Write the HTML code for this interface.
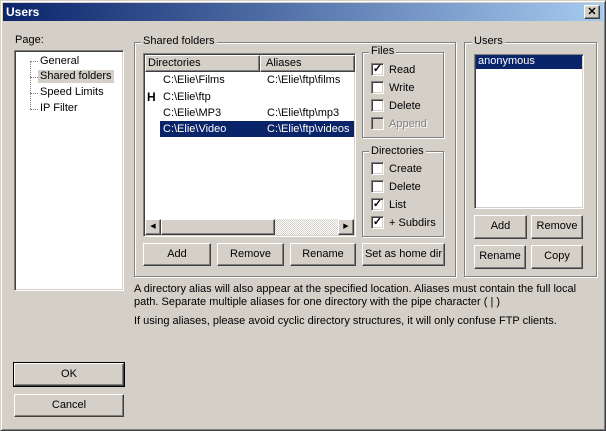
<!DOCTYPE html>
<html><head><meta charset="utf-8"><style>
*{box-sizing:border-box}
body{margin:0;width:606px;height:431px;background:#d4d0c8;font:11px "Liberation Sans",sans-serif;color:#000;position:relative;overflow:hidden}
.a{position:absolute}
.win{left:0;top:0;width:606px;height:431px;border:1px solid;border-color:#d4d0c8 #404040 #404040 #d4d0c8;box-shadow:inset 1px 1px #fff,inset -1px -1px #808080}
.title{left:3px;top:3px;width:600px;height:18px;background:linear-gradient(90deg,#0a246a,#a6caf0);color:#fff;font-weight:bold;font-size:12px;padding:2px 0 0 3px}
.close{left:584px;top:5px;width:16px;height:14px;background:#d4d0c8;border:1px solid;border-color:#fff #404040 #404040 #fff;box-shadow:inset -1px -1px #808080;font-size:11px;font-weight:bold;text-align:center;line-height:12px;color:#000}
.sunk{background:#fff;border:1px solid;border-color:#808080 #fff #fff #808080;box-shadow:inset 1px 1px #404040,inset -1px -1px #d4d0c8}
.grp{border:1px solid #808080;box-shadow:1px 1px #fff,inset 1px 1px #fff}
.gl{background:#d4d0c8;padding:0 2px;line-height:12px}
.btn{background:#d4d0c8;border:1px solid;border-color:#fff #404040 #404040 #fff;box-shadow:inset -1px -1px #808080;text-align:center;line-height:20px}
.cb{width:13px;height:13px;background:#fff;border:1px solid;border-color:#808080 #fff #fff #808080;box-shadow:inset 1px 1px #404040,inset -1px -1px #d4d0c8;font-size:11px;line-height:10px;text-align:center;font-weight:bold}
.dis{background:#d4d0c8}
.t{white-space:nowrap;line-height:13px}
.dot{border-top:1px dotted #808080;width:8px}
</style></head><body>
<div class="a win"></div>
<div class="a title">Users</div>
<div class="a close">✕</div>

<div class="a t" style="left:15px;top:34px">Page:</div>
<div class="a sunk" style="left:14px;top:50px;width:110px;height:241px"></div>
<div class="a" style="left:30px;top:61px;height:48px;border-left:1px dotted #808080"></div>
<div class="a dot" style="left:30px;top:61px"></div>
<div class="a dot" style="left:30px;top:77px"></div>
<div class="a dot" style="left:30px;top:93px"></div>
<div class="a dot" style="left:30px;top:109px"></div>
<div class="a t" style="left:40px;top:55px">General</div>
<div class="a t" style="left:38px;top:70px;background:#d4d0c8;padding:0 2px">Shared folders</div>
<div class="a t" style="left:40px;top:86px">Speed Limits</div>
<div class="a t" style="left:40px;top:102px">IP Filter</div>

<div class="a grp" style="left:134px;top:42px;width:322px;height:235px"></div>
<div class="a gl t" style="left:141px;top:35px">Shared folders</div>
<div class="a sunk" style="left:143px;top:53px;width:213px;height:184px"></div>
<div class="a btn" style="left:145px;top:55px;width:115px;height:17px;text-align:left;padding-left:2px;line-height:15px">Directories</div>
<div class="a btn" style="left:260px;top:55px;width:95px;height:17px;text-align:left;padding-left:5px;line-height:15px">Aliases</div>
<div class="a t" style="left:163px;top:74px">C:\Elie\Films</div><div class="a t" style="left:267px;top:74px">C:\Elie\ftp\films</div>
<div class="a t" style="left:147px;top:91px;font-weight:bold;font-size:12px">H</div><div class="a t" style="left:163px;top:91px">C:\Elie\ftp</div>
<div class="a t" style="left:163px;top:107px">C:\Elie\MP3</div><div class="a t" style="left:267px;top:107px">C:\Elie\ftp\mp3</div>
<div class="a" style="left:160px;top:121px;width:194px;height:16px;background:#0a246a"></div>
<div class="a t" style="left:163px;top:123px;color:#fff">C:\Elie\Video</div><div class="a t" style="left:267px;top:123px;color:#fff;width:87px;overflow:hidden">C:\Elie\ftp\videos</div>
<div class="a" style="left:145px;top:219px;width:209px;height:16px;background:repeating-conic-gradient(#fff 0 25%,#d4d0c8 0 50%) 0 0/2px 2px"></div>
<div class="a btn" style="left:145px;top:219px;width:16px;height:16px;font-size:7px;line-height:14px">◀</div>
<div class="a btn" style="left:161px;top:219px;width:114px;height:16px"></div>
<div class="a btn" style="left:338px;top:219px;width:16px;height:16px;font-size:7px;line-height:14px">▶</div>

<div class="a grp" style="left:362px;top:52px;width:82px;height:86px"></div>
<div class="a gl t" style="left:369px;top:45px">Files</div>
<div class="a cb" style="left:371px;top:63px">✓</div><div class="a t" style="left:389px;top:64px">Read</div>
<div class="a cb" style="left:371px;top:81px"></div><div class="a t" style="left:389px;top:82px">Write</div>
<div class="a cb" style="left:371px;top:99px"></div><div class="a t" style="left:389px;top:100px">Delete</div>
<div class="a cb dis" style="left:371px;top:117px"></div><div class="a t" style="left:389px;top:118px;color:#808080;text-shadow:1px 1px #fff">Append</div>

<div class="a grp" style="left:362px;top:151px;width:82px;height:86px"></div>
<div class="a gl t" style="left:369px;top:145px">Directories</div>
<div class="a cb" style="left:371px;top:162px"></div><div class="a t" style="left:389px;top:163px">Create</div>
<div class="a cb" style="left:371px;top:180px"></div><div class="a t" style="left:389px;top:181px">Delete</div>
<div class="a cb" style="left:371px;top:198px">✓</div><div class="a t" style="left:389px;top:199px">List</div>
<div class="a cb" style="left:371px;top:216px">✓</div><div class="a t" style="left:389px;top:217px">+ Subdirs</div>

<div class="a btn" style="left:143px;top:243px;width:68px;height:23px">Add</div>
<div class="a btn" style="left:217px;top:243px;width:67px;height:23px">Remove</div>
<div class="a btn" style="left:290px;top:243px;width:66px;height:23px">Rename</div>
<div class="a btn" style="left:362px;top:243px;width:83px;height:23px;white-space:nowrap;overflow:hidden">Set as home dir</div>

<div class="a grp" style="left:464px;top:42px;width:133px;height:235px"></div>
<div class="a gl t" style="left:472px;top:35px">Users</div>
<div class="a sunk" style="left:474px;top:54px;width:110px;height:155px"></div>
<div class="a t" style="left:476px;top:55px;width:106px;height:14px;background:#0a246a;color:#fff;padding-left:2px">anonymous</div>
<div class="a btn" style="left:474px;top:215px;width:53px;height:24px">Add</div>
<div class="a btn" style="left:531px;top:215px;width:52px;height:24px">Remove</div>
<div class="a btn" style="left:474px;top:245px;width:52px;height:24px">Rename</div>
<div class="a btn" style="left:531px;top:245px;width:52px;height:24px">Copy</div>

<div class="a t" style="left:134px;top:283px">A directory alias will also appear at the specified location. Aliases must contain the full local</div>
<div class="a t" style="left:134px;top:296px">path. Separate multiple aliases for one directory with the pipe character ( | )</div>
<div class="a t" style="left:134px;top:315px">If using aliases, please avoid cyclic directory structures, it will only confuse FTP clients.</div>

<div class="a btn" style="left:14px;top:363px;width:110px;height:23px;outline:1px solid #000">OK</div>
<div class="a btn" style="left:14px;top:394px;width:110px;height:23px">Cancel</div>
</body></html>
